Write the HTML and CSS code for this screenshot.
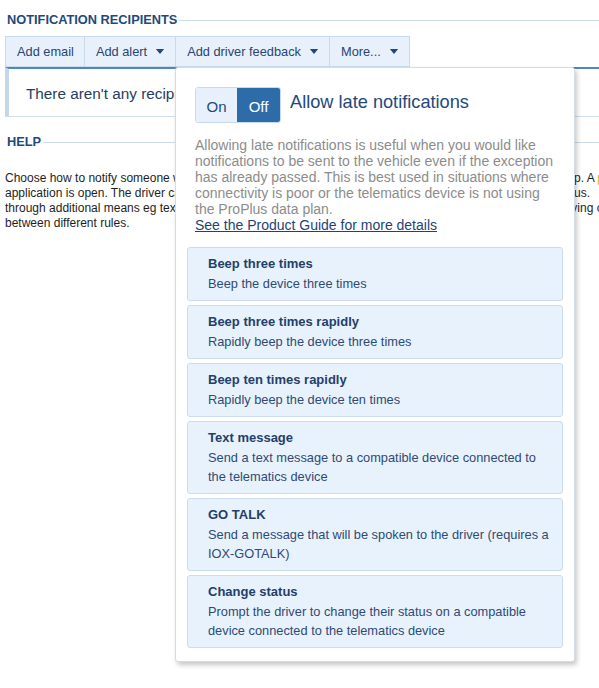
FILE: index.html
```html
<!DOCTYPE html>
<html>
<head>
<meta charset="utf-8">
<link rel="stylesheet" href="styles.css">
</head>
<body>
<div class="page">
  <h2 class="section-title"><span>NOTIFICATION RECIPIENTS</span></h2>
  <div class="toolbar">
    <button class="tb-btn">Add email</button>
    <button class="tb-btn">Add alert <svg class="caret" width="10" height="6" viewBox="0 0 10 6"><path d="M0 0H10L5 6Z"/></svg></button>
    <button class="tb-btn">Add driver feedback <svg class="caret" width="10" height="6" viewBox="0 0 10 6"><path d="M0 0H10L5 6Z"/></svg></button>
    <button class="tb-btn">More... <svg class="caret" width="10" height="6" viewBox="0 0 10 6"><path d="M0 0H10L5 6Z"/></svg></button>
  </div>
  <div class="notice">There aren't any recipients yet. Use the buttons above to add one.</div>

  <h2 class="section-title help-title"><span>HELP</span></h2>
  <p class="help-text">Choose how to notify someone when this rule is broken. Notifications are sent by email or shown as a popup. A <span class="hl">popup</span> appears when the<br>application is open. The driver can be notified using the vehicle's telematics device, or asked to change status.<br>through additional means eg text message or GO TALK. Templates can be used to customize the email, saving content<br>between different rules.</p>

  <div class="popup">
    <div class="popup-head">
      <div class="toggle-row">
        <div class="toggle">
          <span class="toggle-opt">On</span>
          <span class="toggle-opt active">Off</span>
        </div>
        <div class="toggle-title">Allow late notifications</div>
      </div>
      <p class="popup-desc">Allowing late notifications is useful when you would like notifications to be sent to the vehicle even if the exception has already passed. This is best used in situations where connectivity is poor or the telematics device is not using the ProPlus data plan.<br><a class="guide-link" href="#">See the Product Guide for more details</a></p>
    </div>
    <ul class="options">
      <li class="option"><div class="opt-title">Beep three times</div><div class="opt-desc">Beep the device three times</div></li>
      <li class="option"><div class="opt-title">Beep three times rapidly</div><div class="opt-desc">Rapidly beep the device three times</div></li>
      <li class="option"><div class="opt-title">Beep ten times rapidly</div><div class="opt-desc">Rapidly beep the device ten times</div></li>
      <li class="option"><div class="opt-title">Text message</div><div class="opt-desc">Send a text message to a compatible device connected to the telematics device</div></li>
      <li class="option"><div class="opt-title">GO TALK</div><div class="opt-desc">Send a message that will be spoken to the driver (requires a IOX-GOTALK)</div></li>
      <li class="option"><div class="opt-title">Change status</div><div class="opt-desc">Prompt the driver to change their status on a compatible device connected to the telematics device</div></li>
    </ul>
  </div>
</div>
</body>
</html>
```

FILE: styles.css
```css
html, body {
  margin: 0;
  padding: 0;
  background: #fff;
  overflow: hidden;
}
body {
  font-family: "Liberation Sans", Arial, sans-serif;
  color: #222;
}
.page {
  position: relative;
  width: 599px;
  height: 688px;
  overflow: hidden;
}
.section-title {
  display: flex;
  align-items: center;
  margin: 0;
  padding: 13px 0 0 7px;
  height: 14px;
  font-size: 12.8px;
  font-weight: bold;
  color: #23497c;
  line-height: 14px;
}
.section-title::after {
  content: "";
  flex: 1;
  height: 1px;
  background: #cddbe9;
  margin-left: 2px;
}
.toolbar {
  display: flex;
  margin: 9px 0 0 5px;
  height: 31px;
}
.tb-btn {
  display: flex;
  align-items: center;
  height: 31px;
  padding: 0 10px 0 11px;
  margin: 0 -1px 0 0;
  border: 1px solid #cadbec;
  background: #e8f1fb;
  font-family: "Liberation Sans", Arial, sans-serif;
  font-size: 12.8px;
  color: #2a4570;
}
.caret {
  margin-left: 8px;
  width: 10px;
  height: 5px;
  fill: #23497c;
}
.notice {
  margin-left: 5px;
  height: 47px;
  border-top: 2px solid #4f86bd;
  border-left: 4px solid #c5d8eb;
  border-bottom: 1px solid #d3dfea;
  padding-left: 17px;
  line-height: 50px;
  font-size: 15.3px;
  color: #273c5e;
  white-space: nowrap;
}
.help-title {
  padding-top: 18px;
}
.help-text {
  margin: 22px 0 0 5px;
  font-size: 12px;
  line-height: 15px;
  color: #1e1e1e;
  white-space: nowrap;
}
.hl {
  color: #e8b21e;
}
.popup {
  position: absolute;
  left: 175px;
  top: 67px;
  width: 398px;
  height: 593px;
  background: #fff;
  border: 1px solid #d3dde8;
  border-radius: 3px;
  box-shadow: 2px 3px 5px rgba(0, 0, 0, 0.22);
}
.popup-head {
  padding: 19px 14px 0 19px;
}
.toggle-row {
  display: flex;
  align-items: flex-start;
}
.toggle {
  display: flex;
  height: 34px;
  border: 1px solid #c8d9eb;
  border-radius: 3px;
  overflow: hidden;
}
.toggle-opt {
  display: flex;
  align-items: center;
  justify-content: center;
  width: 41px;
  font-size: 15px;
  color: #23497c;
  background: #e8f1fb;
  padding-top: 2px;
}
.toggle-opt.active {
  width: 43px;
  background: #2d6ca9;
  color: #fff;
}
.toggle-title {
  margin: 4px 0 0 9px;
  font-size: 18.2px;
  line-height: 22px;
  color: #23497c;
}
.popup-desc {
  margin: 14px 0 0;
  font-size: 14px;
  line-height: 16px;
  color: #8c8c8c;
}
.guide-link {
  color: #1f4377;
  text-decoration: underline;
}
.options {
  list-style: none;
  margin: 14px 11px 0;
  padding: 0;
  display: flex;
  flex-direction: column;
  gap: 4px;
}
.option {
  background: #e8f2fc;
  border: 1px solid #cadcee;
  border-radius: 3px;
  padding: 6px 10px 7px 20px;
}
.opt-title {
  font-size: 13px;
  font-weight: bold;
  line-height: 20px;
  color: #243f6b;
}
.opt-desc {
  font-size: 12.8px;
  line-height: 19px;
  color: #2e4a75;
}
```
